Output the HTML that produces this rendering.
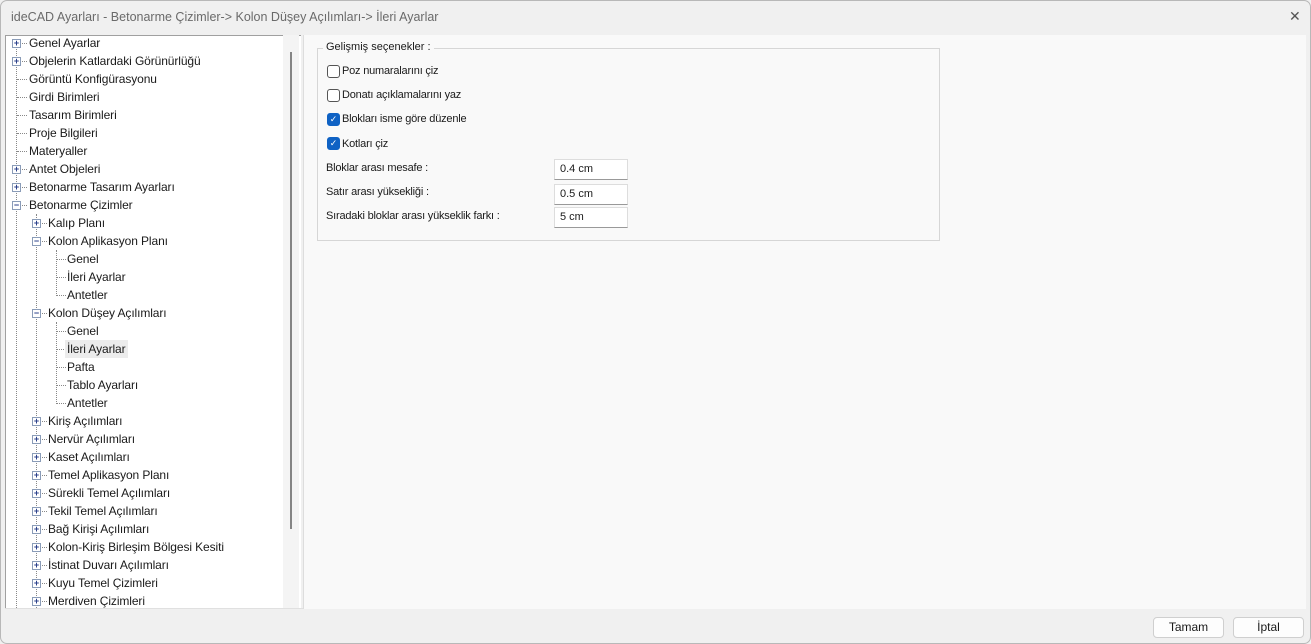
<!DOCTYPE html>
<html><head><meta charset="utf-8"><style>
*{margin:0;padding:0;box-sizing:border-box}
body{width:1311px;height:644px;background:#f0f0f0;font-family:"Liberation Sans",sans-serif;font-size:12px;color:#1a1a1a;position:relative;overflow:hidden}
.win{position:absolute;left:0;top:0;width:1311px;height:644px;border:1px solid #b8b8b8;border-radius:7px;background:#f0f0f0}
.title{position:absolute;left:10px;top:9px;font-size:12.5px;color:#6a6a6a}
.close{position:absolute;left:1288px;top:7px;font-size:14px;color:#555}
.tree{position:absolute;left:4px;top:34px;width:296px;height:574px;background:#fff;border:1px solid #a0a0a0;border-right:none;overflow:hidden}
.sb{position:absolute;left:282px;top:34px;width:16px;height:573px;background:#f4f4f4}
.thumb{position:absolute;left:289px;top:51px;width:2px;height:477px;background:#858585}
.row{position:absolute;height:18px;line-height:18px;white-space:nowrap;letter-spacing:-0.1px}
.bx{position:absolute;width:9px;height:9px;border:1px solid #8a9cb8;background:#fff;font-size:9px;line-height:7px;text-align:center;color:#2a3f8a;font-weight:bold}
.vl{position:absolute;border-left:1px dotted #888;width:0}
.hl{position:absolute;border-top:1px dotted #888;height:0}
.right{position:absolute;left:302px;top:34px;width:1003px;height:574px;background:#f9f9f9;border-left:1px solid #ddd}
.grp{position:absolute;left:316px;top:47px;width:623px;height:193px;border:1px solid #d6d6d6}
.lg{position:absolute;left:322px;top:40px;background:#f9f9f9;padding:0 3px;font-size:11px}
.cb{position:absolute;width:13px;height:13px;border:1px solid #555;border-radius:3px;background:#fff}
.cb.on{background:#0f62c4;border-color:#0f62c4;color:#fff;font-size:9px;line-height:11px;text-align:center}
.lbl{position:absolute;font-size:11px;letter-spacing:-0.2px}
.inp{position:absolute;left:553px;width:74px;height:21px;background:#fff;border:1px solid #ddd;border-bottom:1px solid #999;font-size:11px;line-height:19px;padding-left:5px}
.btn{position:absolute;top:616px;width:71px;height:21px;border:1px solid #cfcfcf;border-radius:4px;background:#fdfdfd;text-align:center;line-height:19px;font-size:12px}
</style></head><body>
<div class="win">
<div class="title">ideCAD Ayarları - Betonarme Çizimler-&gt; Kolon Düşey Açılımları-&gt; İleri Ayarlar</div>
<div class="close">✕</div>
<div class="tree"></div>
<div class="sb"></div><div class="thumb"></div>
<div class="right"></div>
<div class="grp"></div>
<div class="lg">Gelişmiş seçenekler :</div>
<div class="cb" style="left:326px;top:64px"></div><div class="lbl" style="left:341px;top:64px">Poz numaralarını çiz</div>
<div class="cb" style="left:326px;top:88px"></div><div class="lbl" style="left:341px;top:88px">Donatı açıklamalarını yaz</div>
<div class="cb on" style="left:326px;top:112px">✓</div><div class="lbl" style="left:341px;top:112px">Blokları isme göre düzenle</div>
<div class="cb on" style="left:326px;top:136px">✓</div><div class="lbl" style="left:341px;top:137px">Kotları çiz</div>
<div class="lbl" style="left:325px;top:161px">Bloklar arası mesafe :</div><div class="inp" style="top:158px">0.4 cm</div>
<div class="lbl" style="left:325px;top:185px">Satır arası yüksekliği :</div><div class="inp" style="top:183px">0.5 cm</div>
<div class="lbl" style="left:325px;top:209px">Sıradaki bloklar arası yükseklik farkı :</div><div class="inp" style="top:206px">5 cm</div>
<div class="btn" style="left:1152px">Tamam</div>
<div class="btn" style="left:1232px">İptal</div>

<div class="vl" style="left:15px;top:42px;height:565px"></div>
<div class="vl" style="left:35px;top:213px;height:394px"></div>
<div class="vl" style="left:55px;top:249px;height:46px"></div>
<div class="vl" style="left:55px;top:321px;height:82px"></div>

<div class="hl" style="left:16px;top:42px;width:10px"></div><div class="bx" style="left:11px;top:38px">+</div><div class="row" style="left:28px;top:33px">Genel Ayarlar</div>
<div class="hl" style="left:16px;top:60px;width:10px"></div><div class="bx" style="left:11px;top:56px">+</div><div class="row" style="left:28px;top:51px">Objelerin Katlardaki Görünürlüğü</div>
<div class="hl" style="left:16px;top:78px;width:10px"></div><div class="row" style="left:28px;top:69px">Görüntü Konfigürasyonu</div>
<div class="hl" style="left:16px;top:96px;width:10px"></div><div class="row" style="left:28px;top:87px">Girdi Birimleri</div>
<div class="hl" style="left:16px;top:114px;width:10px"></div><div class="row" style="left:28px;top:105px">Tasarım Birimleri</div>
<div class="hl" style="left:16px;top:132px;width:10px"></div><div class="row" style="left:28px;top:123px">Proje Bilgileri</div>
<div class="hl" style="left:16px;top:150px;width:10px"></div><div class="row" style="left:28px;top:141px">Materyaller</div>
<div class="hl" style="left:16px;top:168px;width:10px"></div><div class="bx" style="left:11px;top:164px">+</div><div class="row" style="left:28px;top:159px">Antet Objeleri</div>
<div class="hl" style="left:16px;top:186px;width:10px"></div><div class="bx" style="left:11px;top:182px">+</div><div class="row" style="left:28px;top:177px">Betonarme Tasarım Ayarları</div>
<div class="hl" style="left:16px;top:204px;width:10px"></div><div class="bx" style="left:11px;top:200px">−</div><div class="row" style="left:28px;top:195px">Betonarme Çizimler</div>
<div class="hl" style="left:36px;top:222px;width:10px"></div><div class="bx" style="left:31px;top:218px">+</div><div class="row" style="left:47px;top:213px">Kalıp Planı</div>
<div class="hl" style="left:36px;top:240px;width:10px"></div><div class="bx" style="left:31px;top:236px">−</div><div class="row" style="left:47px;top:231px">Kolon Aplikasyon Planı</div>
<div class="hl" style="left:56px;top:258px;width:9px"></div><div class="row" style="left:66px;top:249px">Genel</div>
<div class="hl" style="left:56px;top:276px;width:9px"></div><div class="row" style="left:66px;top:267px">İleri Ayarlar</div>
<div class="hl" style="left:56px;top:294px;width:9px"></div><div class="row" style="left:66px;top:285px">Antetler</div>
<div class="hl" style="left:36px;top:312px;width:10px"></div><div class="bx" style="left:31px;top:308px">−</div><div class="row" style="left:47px;top:303px">Kolon Düşey Açılımları</div>
<div class="hl" style="left:56px;top:330px;width:9px"></div><div class="row" style="left:66px;top:321px">Genel</div>
<div class="hl" style="left:56px;top:348px;width:9px"></div><div class="row" style="left:64px;top:339px;background:#ececec;padding:0 2px">İleri Ayarlar</div>
<div class="hl" style="left:56px;top:366px;width:9px"></div><div class="row" style="left:66px;top:357px">Pafta</div>
<div class="hl" style="left:56px;top:384px;width:9px"></div><div class="row" style="left:66px;top:375px">Tablo Ayarları</div>
<div class="hl" style="left:56px;top:402px;width:9px"></div><div class="row" style="left:66px;top:393px">Antetler</div>
<div class="hl" style="left:36px;top:420px;width:10px"></div><div class="bx" style="left:31px;top:416px">+</div><div class="row" style="left:47px;top:411px">Kiriş Açılımları</div>
<div class="hl" style="left:36px;top:438px;width:10px"></div><div class="bx" style="left:31px;top:434px">+</div><div class="row" style="left:47px;top:429px">Nervür Açılımları</div>
<div class="hl" style="left:36px;top:456px;width:10px"></div><div class="bx" style="left:31px;top:452px">+</div><div class="row" style="left:47px;top:447px">Kaset Açılımları</div>
<div class="hl" style="left:36px;top:474px;width:10px"></div><div class="bx" style="left:31px;top:470px">+</div><div class="row" style="left:47px;top:465px">Temel Aplikasyon Planı</div>
<div class="hl" style="left:36px;top:492px;width:10px"></div><div class="bx" style="left:31px;top:488px">+</div><div class="row" style="left:47px;top:483px">Sürekli Temel Açılımları</div>
<div class="hl" style="left:36px;top:510px;width:10px"></div><div class="bx" style="left:31px;top:506px">+</div><div class="row" style="left:47px;top:501px">Tekil Temel Açılımları</div>
<div class="hl" style="left:36px;top:528px;width:10px"></div><div class="bx" style="left:31px;top:524px">+</div><div class="row" style="left:47px;top:519px">Bağ Kirişi Açılımları</div>
<div class="hl" style="left:36px;top:546px;width:10px"></div><div class="bx" style="left:31px;top:542px">+</div><div class="row" style="left:47px;top:537px">Kolon-Kiriş Birleşim Bölgesi Kesiti</div>
<div class="hl" style="left:36px;top:564px;width:10px"></div><div class="bx" style="left:31px;top:560px">+</div><div class="row" style="left:47px;top:555px">İstinat Duvarı Açılımları</div>
<div class="hl" style="left:36px;top:582px;width:10px"></div><div class="bx" style="left:31px;top:578px">+</div><div class="row" style="left:47px;top:573px">Kuyu Temel Çizimleri</div>
<div class="hl" style="left:36px;top:600px;width:10px"></div><div class="bx" style="left:31px;top:596px">+</div><div class="row" style="left:47px;top:591px">Merdiven Çizimleri</div>
<div style="position:absolute;left:4px;top:607px;width:298px;height:1px;background:#e0e0e0"></div>
</div>
</body></html>
